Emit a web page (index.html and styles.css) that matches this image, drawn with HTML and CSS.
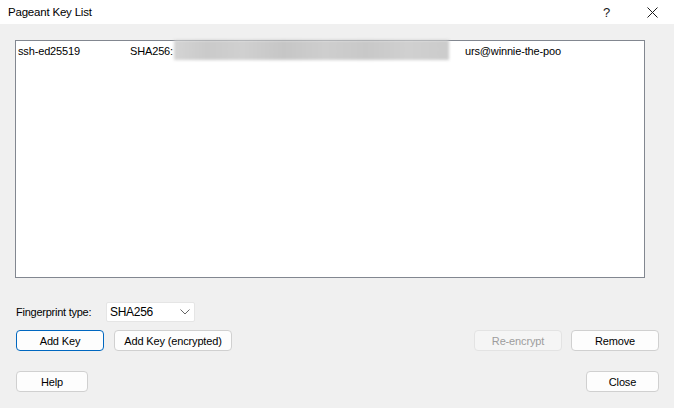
FILE: index.html
```html
<!DOCTYPE html>
<html>
<head>
<meta charset="utf-8">
<link rel="stylesheet" href="styles.css">
</head>
<body>
<div class="window">
  <div class="titlebar">
    <span class="title">Pageant Key List</span>
    <span class="tb-help">?</span>
    <span class="tb-close">
      <svg width="11" height="11" viewBox="0 0 11 11"><path d="M0.5 0.5 L10.5 10.5 M10.5 0.5 L0.5 10.5" stroke="#1a1a1a" stroke-width="1" fill="none"/></svg>
    </span>
  </div>
  <div class="client">
    <div class="listbox">
      <div class="row">
        <span class="c1">ssh-ed25519</span>
        <span class="c2">SHA256:<span class="blur"></span></span>
        <span class="c3">urs@winnie-the-poo</span>
      </div>
    </div>
    <div class="fp-row">
      <span class="fp-label">Fingerprint type:</span>
      <div class="combo">
        <span>SHA256</span>
        <svg width="10" height="6" viewBox="0 0 10 6"><path d="M0.5 0.5 L5 5 L9.5 0.5" stroke="#666" stroke-width="1" fill="none"/></svg>
      </div>
    </div>
    <div class="btn-row">
      <button class="btn w88 default">Add Key</button>
      <button class="btn w118">Add Key (encrypted)</button>
      <span class="spacer"></span>
      <button class="btn w88 disabled">Re-encrypt</button>
      <button class="btn w88">Remove</button>
    </div>
    <div class="btn-row bottom">
      <button class="btn w72">Help</button>
      <span class="spacer"></span>
      <button class="btn w73">Close</button>
    </div>
  </div>
</div>
</body>
</html>
```
FILE: styles.css
```css
html, body {
  margin: 0;
  padding: 0;
  width: 674px;
  height: 408px;
  overflow: hidden;
  background: #f0f0f0;
}
.window {
  width: 674px;
  height: 408px;
  display: flex;
  flex-direction: column;
  font-family: "Liberation Sans", Arial, sans-serif;
  font-size: 11px;
  letter-spacing: -0.15px;
  color: #000;
}
.titlebar {
  height: 24px;
  background: #fff;
  display: flex;
  align-items: center;
  font-family: "Liberation Sans", Arial, sans-serif;
  font-size: 11.5px;
  letter-spacing: -0.2px;
}
.title {
  padding-left: 8px;
  flex: 1;
  color: #000;
}
.tb-help {
  width: 14px;
  margin-right: 30px;
  font-size: 13px;
  letter-spacing: 0;
  color: #1a1a1a;
}
.tb-close {
  width: 11px;
  height: 11px;
  margin-right: 16px;
  display: flex;
}
.client {
  flex: 1;
  padding: 16px 15px 0 15px;
  display: flex;
  flex-direction: column;
}
.listbox {
  width: 630px;
  height: 238px;
  box-sizing: border-box;
  border: 1px solid #828790;
  background: #fff;
}
.row {
  display: flex;
  height: 18px;
  align-items: center;
  padding-top: 1px;
}
.c1 { width: 112px; padding-left: 2px; }
.c2 { width: 335px; display: flex; align-items: center; }
.c3 { flex: 1; }
.blur {
  display: inline-block;
  width: 275px;
  height: 20px;
  margin-top: -2px;
  margin-left: 1px;
  background: linear-gradient(90deg, #d4d4d4 0%, #cacaca 12%, #d0d0d0 25%, #c6c6c6 40%, #cecece 55%, #c8c8c8 70%, #d0d0d0 85%, #cbcbcb 100%);
  filter: blur(1.5px);
}
.fp-row {
  margin-top: 24px;
  display: flex;
  align-items: center;
  height: 20px;
}
.fp-label {
  width: 90px;
  padding-left: 1px;
  letter-spacing: -0.25px;
}
.combo {
  width: 89px;
  height: 20px;
  box-sizing: border-box;
  background: #fff;
  border: 1px solid #e5e5e5;
  border-radius: 2px;
  display: flex;
  align-items: center;
  justify-content: space-between;
  padding: 0 4px 0 3px;
  font-size: 12px;
  letter-spacing: -0.3px;
}
.btn-row {
  margin-top: 8px;
  display: flex;
  align-items: center;
  padding-left: 1px;
}
.btn-row.bottom {
  margin-top: 20px;
}
.spacer { flex: 1; }
.btn {
  height: 21px;
  box-sizing: border-box;
  border: 1px solid #d0d0d0;
  border-radius: 4px;
  background: #fdfdfd;
  font-family: "Liberation Sans", Arial, sans-serif;
  font-size: 11px;
  letter-spacing: -0.15px;
  color: #000;
  padding: 0;
  margin: 0 10px 0 0;
}
.w88 { width: 88px; }
.w118 { width: 118px; }
.w72 { width: 72px; }
.w73 { width: 73px; }
.btn.default {
  border-color: #0067c0;
}
.btn.disabled {
  color: #9d9d9d;
  border-color: #e3e3e3;
  background: #f5f5f5;
}
.btn-row .btn:last-child { margin-right: 0; }
.btn-row .disabled { margin-right: 9px; }
```
